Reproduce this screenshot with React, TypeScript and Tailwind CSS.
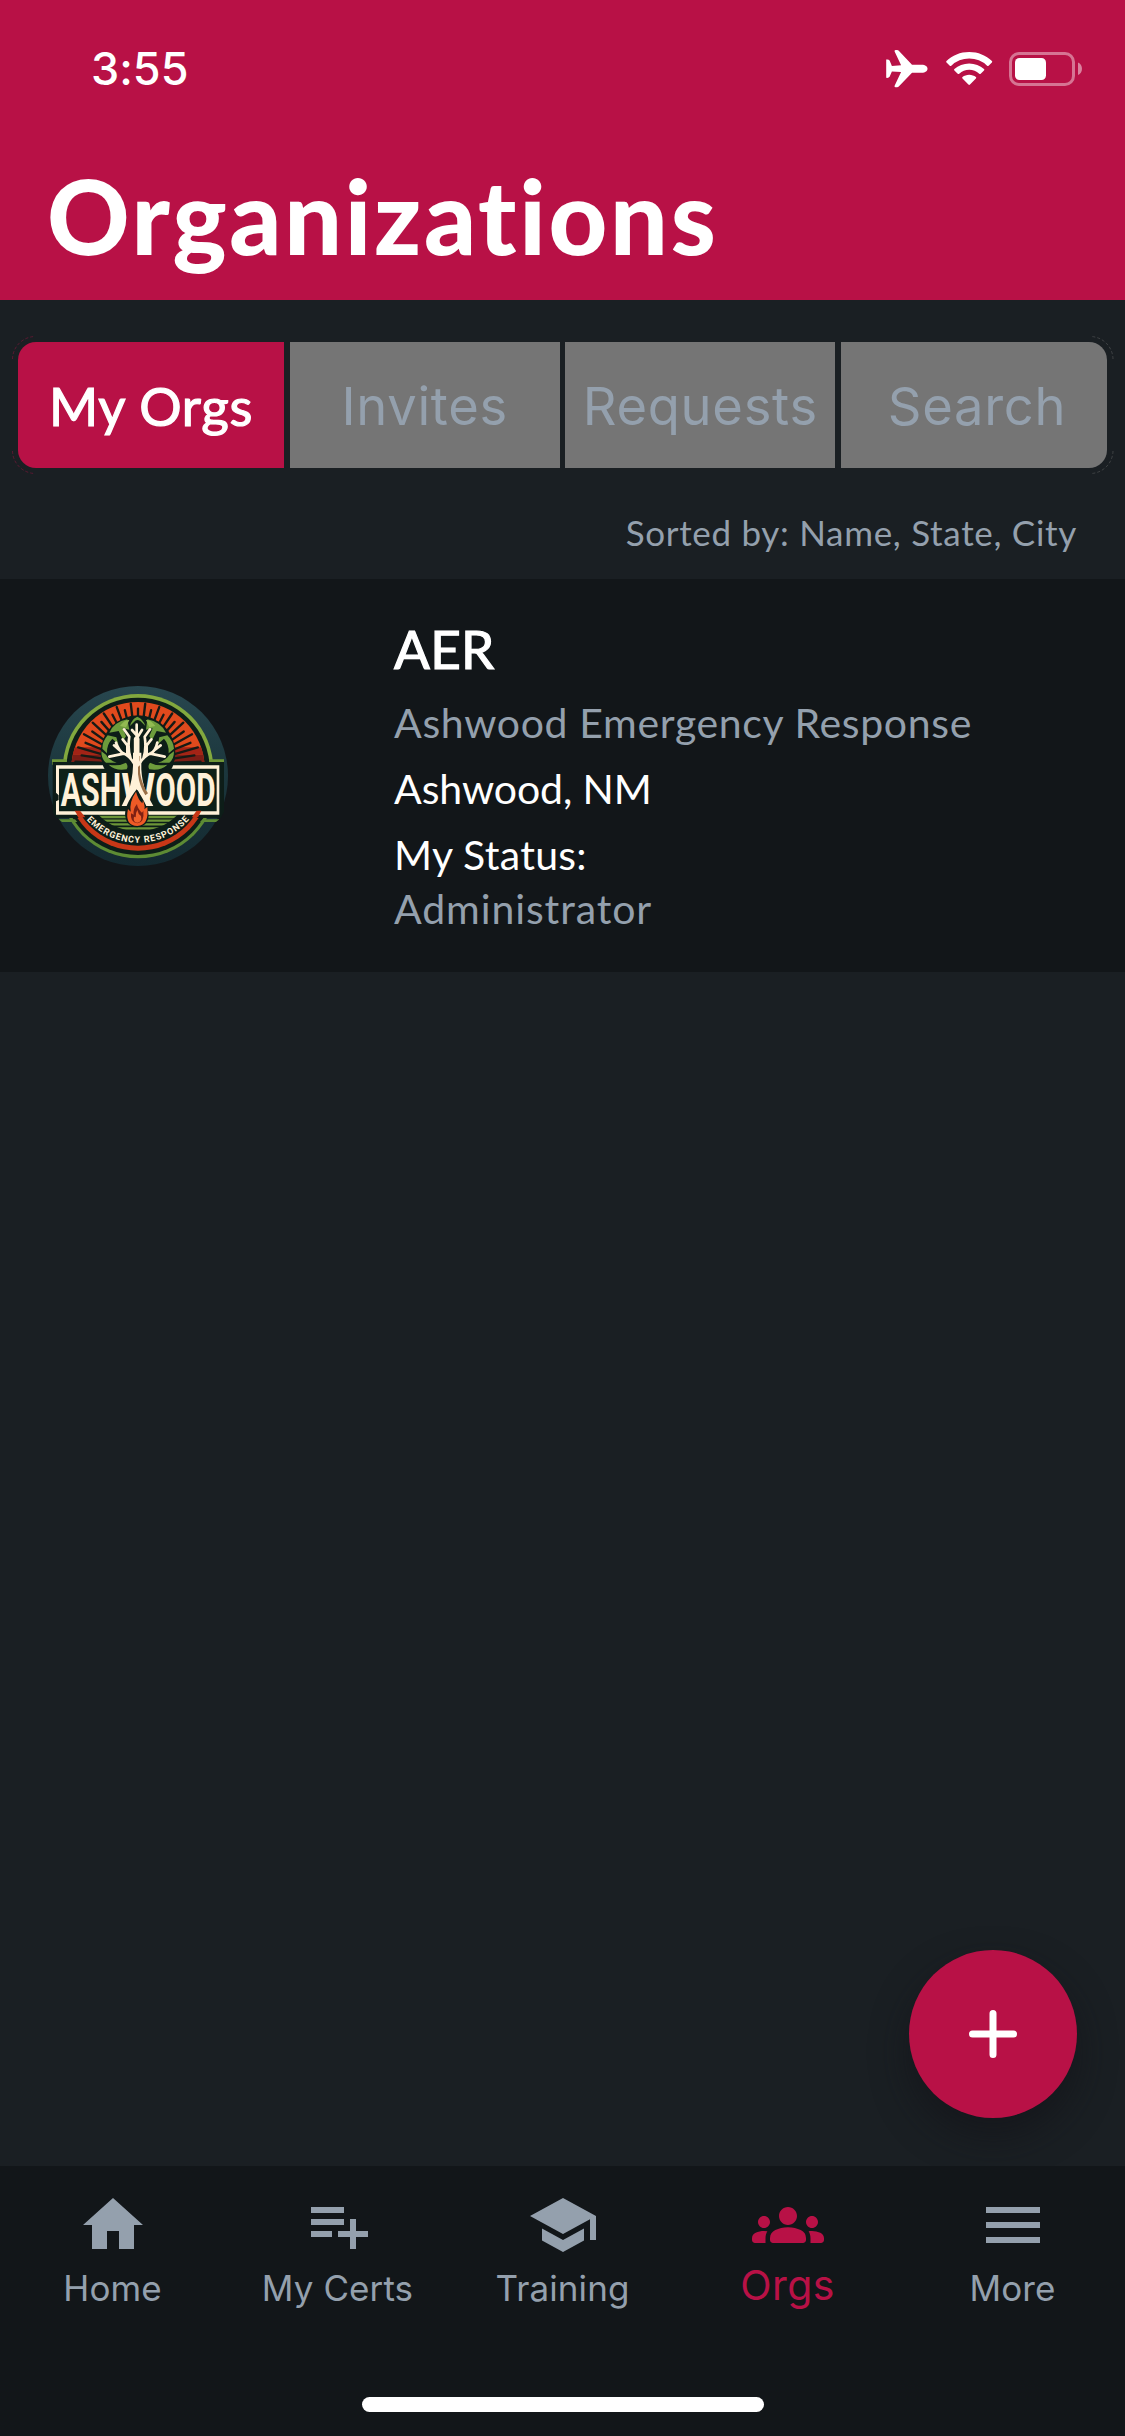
import React from "react";

const tabs = [
  {
    label: "My Orgs",
    cls: "w-[266px] rounded-l-[18px] bg-[#b81146] pt-[2px] font-['Lato',sans-serif] text-[53px] tracking-[0.7px] text-white [-webkit-text-stroke:1.2px_white]",
  },
  { label: "Invites", cls: "w-[270px] bg-[#757575] pt-[2px] font-['Inter',sans-serif] text-[52.500px] tracking-[0.7px] text-[#94a0ad]" },
  { label: "Requests", cls: "w-[270px] bg-[#757575] pt-[2px] font-['Inter',sans-serif] text-[52.500px] tracking-[0.7px] text-[#94a0ad]" },
  { label: "Search", cls: "w-[266px] rounded-r-[18px] bg-[#757575] pt-[2px] pl-[6px] font-['Inter',sans-serif] text-[52.500px] tracking-[0.7px] text-[#94a0ad]" },
];

const nav = [
  { label: "Home", d: "M10 20v-6h4v6h5v-8h3L12 3 2 12h3v8z" },
  {
    label: "My Certs",
    d: "M14 10H3v2h11v-2zm0-4H3v2h11V6zm4 8v-4h-2v4h-4v2h4v4h2v-4h4v-2h-4zM3 16h7v-2H3v2z",
  },
  { label: "Training", d: "M5 13.18v4L12 21l7-3.82v-4L12 17l-7-3.82zM12 3L1 9l11 6 9-4.91V17h2V9L12 3z" },
  {
    label: "Orgs",
    active: true,
    d: "M12 12.75c1.63 0 3.07.39 4.24.9A2.99 2.99 0 0 1 18 16.39V17c0 .55-.45 1-1 1H7c-.55 0-1-.45-1-1v-.61c0-1.18.68-2.26 1.76-2.73 1.17-.52 2.61-.91 4.24-.91zM4 13c1.1 0 2-.9 2-2s-.9-2-2-2-2 .9-2 2 .9 2 2 2zm1.13 1.1A6.95 6.95 0 0 0 4 14c-.99 0-1.93.21-2.78.58A2.01 2.01 0 0 0 0 16.43V17c0 .55.45 1 1 1h3.5v-1.61c0-.83.23-1.61.63-2.29zM20 13c1.1 0 2-.9 2-2s-.9-2-2-2-2 .9-2 2 .9 2 2 2zm4 3.43c0-.81-.48-1.53-1.22-1.85A6.95 6.95 0 0 0 20 14c-.39 0-.76.04-1.13.1.4.68.63 1.46.63 2.29V18H23c.55 0 1-.45 1-1v-.57zM12 6c1.66 0 3 1.34 3 3s-1.34 3-3 3-3-1.34-3-3 1.34-3 3-3z",
  },
  { label: "More", d: "M3 18h18v-2H3v2zm0-5h18v-2H3v2zm0-7v2h18V6H3z" },
];

const rays = Array.from({ length: 27 }, (_, i) => 180 + 4 + (i * 172) / 26);

function StatusIcons() {
  return (
    <svg className="h-[40px] w-[200px]" viewBox="885 49 200 40" fill="#fff">
      <path d="M886.2 59.6q2.4-.5 3.4 1l2.3 5.3 9.200-.6L894.600 51.500q-.5-1.600 1-1.600h1.400q1.300 0 2 1L912 64.800h9.500c4 0 6 2 6 4s-2 4-6 4H912L899 86.300q-.8 1-2 1h-1.400q-1.500 0-1-1.600l6.500-13.600-9.200-.6-2.300 5.300q-1 1.500-3.400 1z" />
      <path d="M969.200 52c8.900 0 16.900 3.400 22.700 9q.7.800 0 1.500l-3.300 3.200q-.7.700-1.500 0a25.600 25.600 0 0 0-35.800 0q-.8.700-1.500 0l-3.300-3.200q-.7-.7 0-1.500c5.800-5.600 13.800-9 22.700-9z" />
      <path d="M969.200 63.400c5.700 0 10.900 2.100 14.800 5.600q.8.800 0 1.500l-3.300 3.300q-.7.600-1.500 0a14.700 14.700 0 0 0-20 0q-.8.600-1.500 0l-3.300-3.300q-.8-.7 0-1.500c3.900-3.500 9.100-5.600 14.800-5.600z" />
      <path d="M969.200 74.800c2.600 0 4.900.9 6.700 2.300q.8.700 0 1.500l-5.900 6q-.8.700-1.600 0l-5.900-6q-.8-.8 0-1.500c1.800-1.400 4.100-2.300 6.700-2.300z" />
      <rect x="1010.500" y="53.500" width="63" height="31" rx="8.500" fill="none" stroke="#fff" strokeOpacity=".42" strokeWidth="3" />
      <path d="M1078 62.500c5.300 2 5.300 10.500 0 12.500z" fillOpacity=".48" />
      <rect x="1015" y="58" width="31" height="22" rx="4.500" />
    </svg>
  );
}

function Logo() {
  return (
    <svg className="size-[180px] shrink-0" viewBox="24 30 540 540">
      <defs>
        <linearGradient id="rim" x1="0" y1="0" x2="0" y2="1">
          <stop offset="0" stopColor="#28474f" />
          <stop offset=".5" stopColor="#1b363c" />
          <stop offset="1" stopColor="#142a31" />
        </linearGradient>
        <clipPath id="top">
          <rect x="24" y="30" width="540" height="228" />
        </clipPath>
        <clipPath id="bottom">
          <rect x="24" y="408" width="540" height="170" />
        </clipPath>
        <clipPath id="ground">
          <circle cx="294" cy="300" r="166" />
        </clipPath>
        <path id="curve" d="M140 431A205 205 0 0 0 450 428" />
      </defs>
      <circle cx="294" cy="300" r="270" fill="url(#rim)" />
      <g clipPath="url(#top)">
        <circle cx="294" cy="280" r="226" fill="#82a83e" />
        <circle cx="294" cy="280" r="215" fill="#0d1d18" />
        <circle cx="294" cy="278" r="200" fill="#e04a1d" />
        <path d="M105 214H483L490 236H98z" fill="#a32316" />
        <path d="M98 236H490L493 258H95z" fill="#7d1d16" />
        <g stroke="#171a15" strokeWidth="7" strokeLinecap="round">
          {rays.map((a, i) => {
            const r = (a * Math.PI) / 180;
            const outer = i % 2 ? 172 : 188;
            return (
              <line key={i} x1={294 + 112 * Math.cos(r)} y1={268 + 112 * Math.sin(r)} x2={294 + outer * Math.cos(r)} y2={270 + outer * Math.sin(r)} />
            );
          })}
        </g>
      </g>
      <g clipPath="url(#bottom)">
        <circle cx="294" cy="310" r="237" fill="#5d8b34" />
        <circle cx="294" cy="308" r="229" fill="#0d1d18" />
        <circle cx="294" cy="306" r="218" fill="#c73717" />
        <circle cx="294" cy="304" r="205" fill="#0d1d18" />
        <g clipPath="url(#ground)" stroke="#6d9638" strokeWidth="7">
          <path d="M168 411H420M168 423H420M170 434H418M178 445H408M222 457H366" />
        </g>
      </g>
      <path d="M36 250H80V258H44V266H36z M508 250H552V266H544V258H508z" fill="#6f9638" />
      <path d="M56 430H105L112 438H66z M480 438L488 430H538L528 438z" fill="#5d8b34" />
      <path d="M38 258H552V408L542 426H470L480 408H105L116 426H48L38 408z" fill="#0d1d18" />
      <path d="M48 268H538V416H48V376L56 372V358L48 350z" fill="#fff1d8" />
      <path d="M57 278H530V406H57z" fill="#0e2018" />
      <path d="M470 404H484L474 424H455z M104 404H120L136 424H116z" fill="#c73717" />
      <circle cx="294" cy="230" r="112" fill="#0d1d18" />
      <g fill="#6d9c3c">
        <path d="M270 150q4-20 22-28q18 8 24 28l-14-14q-12-9-20 2z" />
        <path d="M262 130q-40 8-54 40l28-5 14 28 8-12-10-24 20 4z" />
        <path d="M322 130q40 8 56 40l-28-5-14 28-8-12 10-24-20 4z" />
        <path d="M203 178q-16 18-16 40l14 14q-2-26 16-44l18 16-6-20z M382 178q18 18 20 40l-16 14q2-26-14-44l-18 16 4-20z" />
        <path d="M184 226q0 24 14 34h32q-24-8-32-24z M402 226q0 24-14 34h-34q26-8 34-24z" />
        <path d="M206 266q20 20 54 14q6-10-2-20-22 12-52 6z M382 266q-20 20-54 14-6-10 2-20 22 12 52 6z" />
        <path d="M240 150q14-20 28-18l-10 22z M346 150q-14-20-28-18l10 22z" fill="#92ba52" />
      </g>
      <g fontFamily="Roboto, sans-serif" fontWeight="700" fontSize="138" fill="#fff1d8">
        <text x="62" y="391" textLength="182" lengthAdjust="spacingAndGlyphs">ASH</text>
        <text x="244" y="391" textLength="102" lengthAdjust="spacingAndGlyphs">W</text>
        <text x="346" y="391" textLength="181" lengthAdjust="spacingAndGlyphs">OOD</text>
      </g>
      <path d="M264 282H320L306 340L318 394H300L291 352L270 392H250L276 330z" fill="#0e2018" />
      <path d="M279 230V270Q278 310 264 350L245 390H264Q288 350 293 342Q304 366 312 390H340L318 350Q306 318 304 280V230z" fill="#fff1d8" />
      <path d="M300 240V290Q306 326 324 352L316 358Q298 330 294 294V240z" fill="#9b7048" />
      <g fill="none" stroke="#fff1d8" strokeLinecap="round" strokeLinejoin="round">
        <path d="M290 265V190" strokeWidth="17" />
        <path d="M290 194V146M290 178L276 162M291 186L306 162" strokeWidth="8" />
        <path d="M284 266Q270 240 250 232Q238 226 228 200M251 233L208 242M238 222L222 208M262 237V208L248 190M272 248Q262 220 268 182L252 160" strokeWidth="8" />
        <path d="M296 266Q312 240 332 232Q346 226 352 200M331 233L374 242M344 222L362 208M320 237V208L334 190M310 248Q320 220 314 182L330 160" strokeWidth="8" />
      </g>
      <path d="M290 340Q250 392 256 422Q260 452 292 454Q324 450 326 420Q326 392 290 340z" fill="#0d1d18" />
      <path d="M288 347Q294 370 307 382L309 373Q316 392 313 400L322 393Q328 448 292 450Q258 448 262 410L264 399L272 407Q267 378 288 347z" fill="#ee5a26" />
      <path d="M291 384Q292 398 306 410L310 404Q314 440 292 442Q270 440 273 412L281 416Q278 400 291 384z" fill="#7d2013" />
      <path d="M292 402Q294 414 303 420Q307 438 292 440Q278 438 282 422L287 424Q286 412 292 402z" fill="#f0622c" />
      <text fontFamily="Roboto, sans-serif" fontWeight="700" fontSize="27" fill="#fff1d8">
        <textPath href="#curve" textLength="348" lengthAdjust="spacing">EMERGENCY RESPONSE</textPath>
      </text>
    </svg>
  );
}

export default function App() {
  return (
    <div className="flex h-[2436px] w-[1125px] flex-col overflow-hidden bg-[#1a1f23] font-['Lato',sans-serif] whitespace-nowrap [font-variant-ligatures:none]">
      <header className="h-[300px] shrink-0 bg-[#b81146] text-white">
        <div className="flex items-start justify-between pt-[39px] pr-[40px] pl-[91px]">
          <span className="font-['Inter',sans-serif] text-[45px] leading-[60px] font-medium">3:55</span>
          <div className="pt-[10px]">
            <StatusIcons />
          </div>
        </div>
        <h1 className="mt-[57px] ml-[47px] text-[102px] leading-[120px] font-black tracking-[2.7px]">Organizations</h1>
      </header>

      <div className="h-[279px] shrink-0">
        <div className="relative mt-[36px] flex h-[138px] justify-between px-[18px] py-[6px]">
          <svg className="absolute inset-0 h-[138px] w-[1125px]" fill="none" strokeDasharray="3 2">
            <path d="M12.500 23A23 23 0 0 1 35 .5M12.500 115A23 23 0 0 0 35 137.500" stroke="#b81146" strokeOpacity=".4" />
            <path d="M1113 23A23 23 0 0 0 1091 .5M1113 115A23 23 0 0 1 1091 137.500" stroke="#757575" strokeOpacity=".4" />
          </svg>
          {tabs.map((t) => (
            <button key={t.label} className={`flex items-center justify-center ${t.cls}`}>
              {t.label}
            </button>
          ))}
        </div>
        <p className="mt-[36px] pr-[48px] text-right text-[35px] leading-[44px] tracking-[0.7px] text-[#94a0ad]">Sorted by: Name, State, City</p>
      </div>

      <section className="flex h-[393px] shrink-0 items-center bg-[#121619] pl-[48px]">
        <Logo />
        <div className="ml-[166px] self-start pt-[37px] text-[41px] leading-[54px] text-white">
          <h2 className="text-[53px] leading-[66px] tracking-[0.3px] [-webkit-text-stroke:1.2px_white]">AER</h2>
          <p className="mt-[14px] tracking-[0.65px] text-[#94a0ad]">Ashwood Emergency Response</p>
          <p className="mt-[12px] tracking-[-0.1px]">Ashwood, NM</p>
          <p className="mt-[12px] tracking-[0.3px]">My Status:</p>
          <p className="tracking-[0.9px] text-[#94a0ad]">Administrator</p>
        </div>
      </section>

      <main className="flex flex-1 items-end justify-end pr-[48px] pb-[48px]">
        <button className="flex size-[168px] items-center justify-center rounded-full bg-[#b81146] shadow-[0_18px_36px_rgba(18,18,24,0.6)]">
          <svg className="size-[48px]" viewBox="0 0 48 48" stroke="#fff" strokeWidth="7" strokeLinecap="round">
            <path d="M24 3.500V44.500M3.500 24H44.500" />
          </svg>
        </button>
      </main>

      <nav className="z-10 flex h-[270px] shrink-0 flex-col items-center bg-[#121619]">
        <div className="grid w-full grid-cols-5 pt-[23px] font-['Inter',sans-serif]">
          {nav.map((n) => (
            <div key={n.label} className={`flex flex-col items-center ${n.active ? "text-[#b81146]" : "text-[#94a0ad]"}`}>
              <svg className="size-[72px]" viewBox="0 0 24 24" fill="currentColor">
                <path d={n.d} />
              </svg>
              <span className={n.active ? "mt-[2px] text-[41px] leading-[44px] tracking-[0.4px]" : "mt-[5px] text-[35px] leading-[44px] tracking-[0.1px]"}>{n.label}</span>
            </div>
          ))}
        </div>
        <div className="mt-auto mb-[24px] h-[15px] w-[402px] rounded-full bg-white" />
      </nav>
    </div>
  );
}
